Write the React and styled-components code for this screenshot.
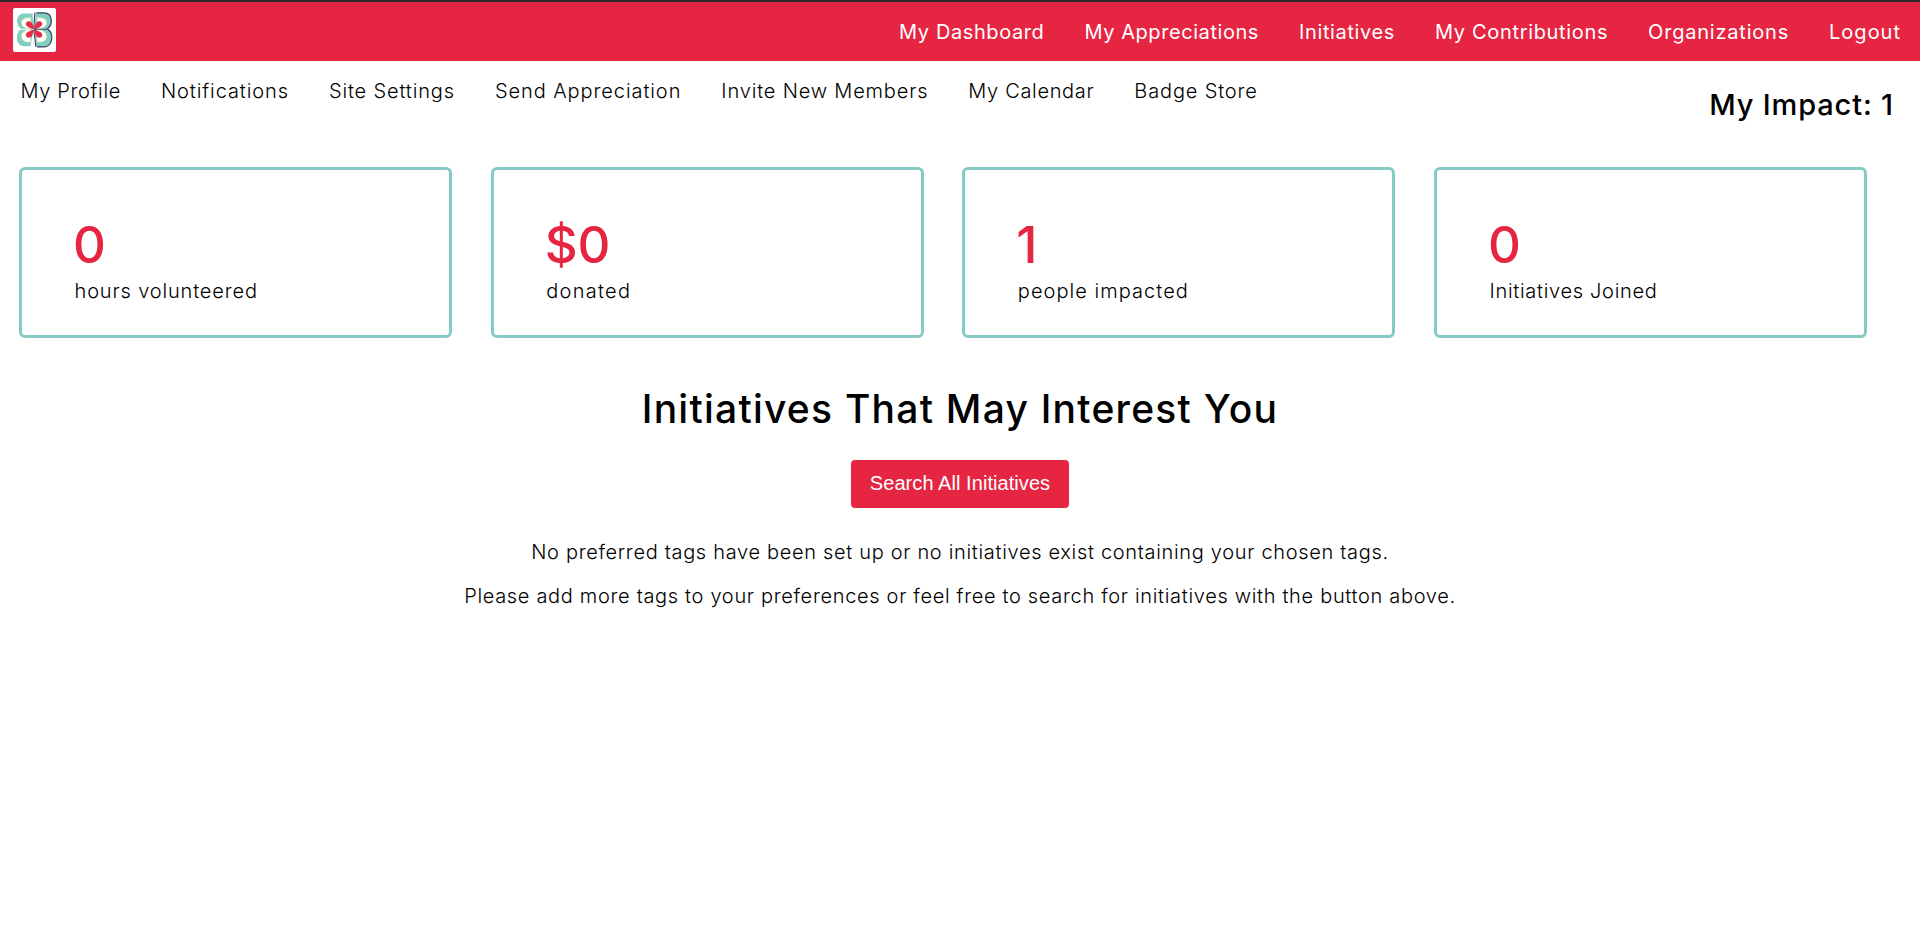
import React from "react";
import styled, { createGlobalStyle } from "styled-components";

const GlobalStyle = createGlobalStyle`
  * { box-sizing: border-box; }
  body {
    margin: 0;
    background: #fff;
    color: #000;
    font-family: Inter, "Liberation Sans", sans-serif;
    font-size: 20px;
    font-weight: 300;
    line-height: 24px;
  }
`;

const Page = styled.div`
  display: flex;
  flex-direction: column;
`;

const TopBar = styled.header`
  display: flex;
  justify-content: space-between;
  align-items: flex-start;
  height: 61px;
  padding: 0 19px 0 13px;
  border-top: 2px solid #2b2829;
  background: #e62543;
`;

const LogoTile = styled.a`
  display: block;
  width: 43px;
  height: 44px;
  margin-top: 6px;
  border-radius: 2px;
  background: #fff;

  svg { display: block; }
`;

const MainNav = styled.nav`
  display: flex;
  gap: 40px;
  padding-top: 18px;
`;

const NavLink = styled.a`
  color: ${(p) => (p.$light ? "#fff" : "#000")};
  font-weight: ${(p) => (p.$light ? 400 : 300)};
  letter-spacing: ${(p) => p.$tracking}px;
  text-decoration: none;
  white-space: nowrap;
`;

const SubHeader = styled.div`
  display: flex;
  justify-content: space-between;
  height: 106px;
  padding: 18px 24px 0 20.5px;
`;

const SubNav = styled.nav`
  display: flex;
  gap: 40px;
`;

const Impact = styled.h2`
  margin: 8px 0 0;
  font-size: 29px;
  font-weight: 500;
  line-height: 36px;
  letter-spacing: 0.85px;
  padding-right: 2px;
`;

const Stats = styled.section`
  display: grid;
  grid-template-columns: repeat(4, 433px);
  column-gap: 38.67px;
  padding-left: 19px;
`;

const StatCard = styled.article`
  height: 171px;
  padding: 45px 0 0 53px;
  border: 3px solid #85cac3;
  border-radius: 6px;
`;

const StatValue = styled.div`
  color: #e62543;
  font-size: 51px;
  font-weight: 500;
  line-height: 60px;
  margin-left: -2px;
`;

const StatLabel = styled.div`
  margin: 4px 0 0 -0.5px;
  letter-spacing: ${(p) => p.$tracking}px;
`;

const Suggestions = styled.section`
  display: flex;
  flex-direction: column;
  align-items: center;
  padding-top: 47px;
`;

const Heading = styled.h1`
  margin: 0 0 27px;
  font-size: 39px;
  font-weight: 500;
  line-height: 48px;
  letter-spacing: 1.24px;
`;

const SearchButton = styled.button`
  width: 218px;
  height: 48px;
  margin-bottom: 32px;
  padding: 0 0 2px;
  border: 0;
  border-radius: 4px;
  background: #e62543;
  color: #fff;
  font: 20px "Liberation Sans", Arial, sans-serif;
  letter-spacing: 0.06px;
  white-space: nowrap;
`;

const Message = styled.p`
  margin: 0 0 20px;
  letter-spacing: 0.68px;
`;

const mainLinks = [
  ["My Dashboard", 0.6],
  ["My Appreciations", 0.57],
  ["Initiatives", 0.63],
  ["My Contributions", 0.66],
  ["Organizations", 0.79],
  ["Logout", 1],
];

const subLinks = [
  ["My Profile", 0.66],
  ["Notifications", 0.9],
  ["Site Settings", 0.86],
  ["Send Appreciation", 0.92],
  ["Invite New Members", 0.83],
  ["My Calendar", 0.67],
  ["Badge Store", 0.85],
];

const stats = [
  ["0", "hours volunteered", 0.85],
  ["$0", "donated", 1.3],
  ["1", "people impacted", 1.05],
  ["0", "Initiatives Joined", 0.7],
];

function ButterflyLogo() {
  return (
    <svg width="43" height="43" viewBox="0 0 43 43" fill="none" aria-hidden="true">
      {/* left wings */}
      <path d="M19.5 5.5H11C2.8 5.5 2.2 16.5 8 20.8C2 25 2.5 38 11 38.3H17.5L20.6 22V20Z" fill="#80cfc0" />
      <path d="M17.8 9.8C10 9.6 7.8 12 8.8 16.5C9.5 19.5 14 20.8 20 21C13 21.7 8.5 24 8.6 28.2C8.8 33.2 12.5 34.5 17.8 34Z" fill="#fff" stroke="#d7e3a8" strokeWidth=".7" />
      <path d="M4 21.3H20" stroke="#fff" strokeWidth="1" />
      {/* right wings */}
      <path d="M22.8 4.8H31C40 5 40 16.5 34.5 20.7C41.5 26 39.5 38.8 31 38.9H23.2L21.6 24V19Z" fill="#80cfc0" />
      <path d="M23.5 4.8H31C40 5 40 16.5 34.5 20.7C41.5 26 39.5 38.8 31 38.9H24" stroke="#394466" strokeWidth="1.3" />
      <path d="M24 9.8C31.8 9.5 34.5 12 33.2 16.5C32.2 19.5 28 20.8 22 21C29.5 21.7 33.4 24 33.4 28.2C33.4 33.2 29.5 34.5 24 34Z" fill="#fff" stroke="#d7e3a8" strokeWidth=".7" />
      {/* petals */}
      <path d="M20.7 21.2C17.8 20.6 13.3 18.8 12.9 16.5C12.6 13.5 15.4 12.8 17.6 13.8C19.6 15 20.4 18.4 20.7 21.2Z" fill="#ee2947" />
      <path d="M21.4 21.2C24.3 20.6 28.8 18.8 29.2 16.5C29.5 13.5 26.7 12.8 24.5 13.8C22.5 15 21.7 18.4 21.4 21.2Z" fill="#ee2947" />
      <path d="M20.7 21.8C17.8 22.4 13.3 24.2 12.9 26.5C12.6 29.5 15.4 30.2 17.6 29.2C19.6 28 20.4 24.6 20.7 21.8Z" fill="#ee2947" />
      <path d="M21.4 21.8C24.3 22.4 28.8 24.2 29.2 26.5C29.5 29.5 26.7 30.2 24.5 29.2C22.5 28 21.7 24.6 21.4 21.8Z" fill="#ee2947" />
      {/* body */}
      <path d="M21.8 4.5L20.9 21.5L22.8 38.8" stroke="#394466" strokeWidth="1.1" />
      <path d="M21 21.3H34.5" stroke="#394466" strokeWidth=".9" />
      <path d="M16 21.5H21" stroke="#e9b4a5" strokeWidth=".8" />
    </svg>
  );
}

export default function App() {
  return (
    <Page>
      <GlobalStyle />
      <TopBar>
        <LogoTile><ButterflyLogo /></LogoTile>
        <MainNav>
          {mainLinks.map(([label, tracking]) => (
            <NavLink key={label} $light $tracking={tracking}>{label}</NavLink>
          ))}
        </MainNav>
      </TopBar>
      <SubHeader>
        <SubNav>
          {subLinks.map(([label, tracking]) => (
            <NavLink key={label} $tracking={tracking}>{label}</NavLink>
          ))}
        </SubNav>
        <Impact>My Impact: 1</Impact>
      </SubHeader>
      <Stats>
        {stats.map(([value, label, tracking]) => (
          <StatCard key={label}>
            <StatValue>{value}</StatValue>
            <StatLabel $tracking={tracking}>{label}</StatLabel>
          </StatCard>
        ))}
      </Stats>
      <Suggestions>
        <Heading>Initiatives That May Interest You</Heading>
        <SearchButton>Search All Initiatives</SearchButton>
        <Message>No preferred tags have been set up or no initiatives exist containing your chosen tags.</Message>
        <Message>Please add more tags to your preferences or feel free to search for initiatives with the button above.</Message>
      </Suggestions>
    </Page>
  );
}
